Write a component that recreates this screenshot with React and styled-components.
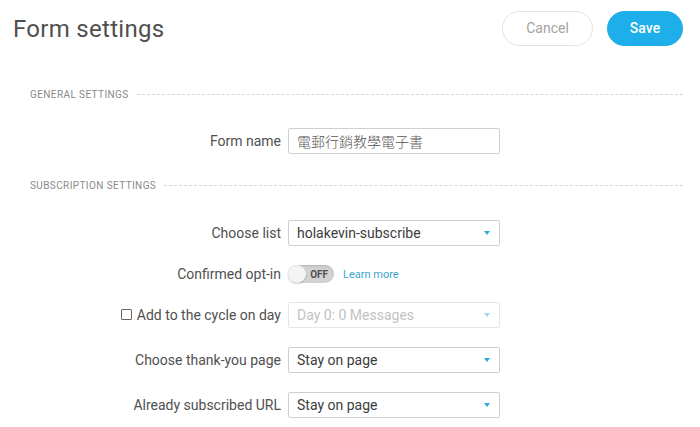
import React from 'react';
import styled, { createGlobalStyle } from 'styled-components';

const Global = createGlobalStyle`
  body {
    margin: 0;
    background: #fff;
    font-family: Roboto, "Noto Sans CJK TC", sans-serif;
  }
`

const Page = styled.div`
  width: 700px;
  height: 427px;
  padding: 0 17px 0 13px;
  box-sizing: border-box;
  overflow: hidden;
`

const Header = styled.div`
  display: flex;
  align-items: center;
  justify-content: space-between;
  height: 55px;
`

const Title = styled.h1`
  margin: 0;
  font-size: 24px;
  font-weight: 400;
  color: #4f4f4f;
  letter-spacing: 0.3px;
  margin-top: 2px;
`

const Actions = styled.div`
  display: flex;
  gap: 14px;
  margin-top: 1px;
`

const Button = styled.button`
  height: 35px;
  border-radius: 18px;
  font-family: Roboto, sans-serif;
  font-size: 14px;
  cursor: pointer;
  width: ${props => props.w}px;
  border: 1px solid ${props => props.primary ? '#1eaeea' : '#e3e3e3'};
  background: ${props => props.primary ? '#1eaeea' : '#fff'};
  color: ${props => props.primary ? '#fff' : '#a3a3a3'};
  font-weight: ${props => props.primary ? 500 : 400};
`

const SectionTitle = styled.div`
  display: flex;
  align-items: center;
  gap: 8px;
  height: 12px;
  padding-left: 17px;
  margin-top: ${props => props.mt}px;
  font-size: 10px;
  color: #8a8a8a;
  text-transform: uppercase;
  letter-spacing: 0.4px;
  &::after {
    content: '';
    flex: 1;
    border-top: 1px dashed #d6d6d6;
  }
`

const Row = styled.div`
  display: grid;
  grid-template-columns: 268px 212px;
  column-gap: 7px;
  align-items: center;
  height: 26px;
  margin-top: ${props => props.mt}px;
`

const Label = styled.label`
  display: flex;
  align-items: center;
  justify-content: flex-end;
  gap: 5px;
  font-size: 14px;
  color: #505050;
`

const Box = styled.span`
  width: 9px;
  height: 9px;
  border: 1px solid #666;
  border-radius: 1px;
  margin-top: -2px;
`

const Field = styled.div`
  display: flex;
  align-items: center;
  justify-content: space-between;
  height: 26px;
  box-sizing: border-box;
  padding: 0 9px 0 8px;
  border: 1px solid ${props => props.disabled ? '#e6e6e6' : '#cfcfcf'};
  border-radius: 2px;
  font-size: 14px;
  color: ${props => props.disabled ? '#c2c2c2' : props.cjk ? '#555' : '#3c3c3c'};
  font-weight: ${props => props.cjk ? 300 : 400};
  font-family: Roboto, "Noto Sans CJK TC", sans-serif;
`

const Arrow = styled.span`
  width: 0;
  height: 0;
  border-left: 3.5px solid transparent;
  border-right: 3.5px solid transparent;
  border-top: 4px solid ${props => props.disabled ? '#9ed8ef' : '#2aa9df'};
`

const ToggleLine = styled.div`
  display: flex;
  align-items: center;
  gap: 9px;
`

const Toggle = styled.div`
  position: relative;
  width: 46px;
  height: 18px;
  border-radius: 9px;
  background: #d2d2d2;
  box-shadow: inset 0 1px 2px rgba(0,0,0,0.15);
  display: flex;
  align-items: center;
  justify-content: flex-end;
  padding-right: 6px;
  box-sizing: border-box;
  font-size: 10px;
  font-weight: 700;
  color: #505050;
  &::before {
    content: '';
    position: absolute;
    left: 0;
    top: 0;
    width: 18px;
    height: 18px;
    border-radius: 50%;
    background: #f4f4f4;
    box-shadow: 0 1px 2px rgba(0,0,0,0.2);
  }
`

const Link = styled.a`
  font-size: 11px;
  color: #3aa6cf;
  text-decoration: none;
`

const Select = ({ value, disabled }) => (
  <Field disabled={disabled}>
    <span>{value}</span>
    <Arrow disabled={disabled} />
  </Field>
)

export default function App() {
  return (
    <Page>
      <Global />
      <Header>
        <Title>Form settings</Title>
        <Actions>
          <Button w={91}>Cancel</Button>
          <Button w={76} primary>Save</Button>
        </Actions>
      </Header>

      <SectionTitle mt={33}>General settings</SectionTitle>
      <Row mt={28}>
        <Label>Form name</Label>
        <Field cjk>電郵行銷教學電子書</Field>
      </Row>

      <SectionTitle mt={25}>Subscription settings</SectionTitle>
      <Row mt={29}>
        <Label>Choose list</Label>
        <Select value="holakevin-subscribe" />
      </Row>
      <Row mt={15}>
        <Label>Confirmed opt-in</Label>
        <ToggleLine>
          <Toggle>OFF</Toggle>
          <Link href="#">Learn more</Link>
        </ToggleLine>
      </Row>
      <Row mt={15}>
        <Label><Box />Add to the cycle on day</Label>
        <Select value="Day 0: 0 Messages" disabled />
      </Row>
      <Row mt={19}>
        <Label>Choose thank-you page</Label>
        <Select value="Stay on page" />
      </Row>
      <Row mt={19}>
        <Label>Already subscribed URL</Label>
        <Select value="Stay on page" />
      </Row>
    </Page>
  )
}
